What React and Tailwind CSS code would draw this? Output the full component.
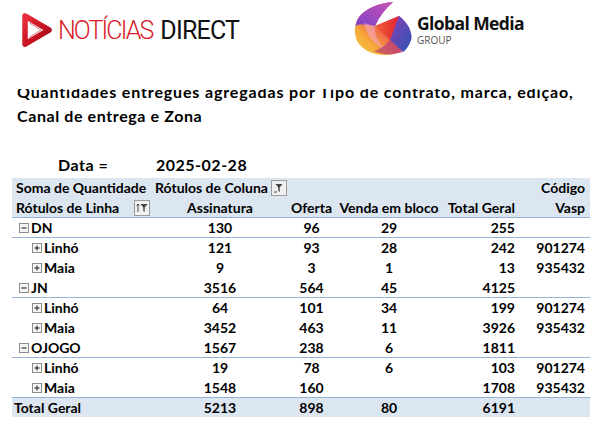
import React from 'react';

const rows = [
  { label: 'DN', level: 0, a: '130', o: '96', v: '29', t: '255', c: '' },
  { label: 'Linhó', level: 1, a: '121', o: '93', v: '28', t: '242', c: '901274' },
  { label: 'Maia', level: 1, a: '9', o: '3', v: '1', t: '13', c: '935432' },
  { label: 'JN', level: 0, a: '3516', o: '564', v: '45', t: '4125', c: '' },
  { label: 'Linhó', level: 1, a: '64', o: '101', v: '34', t: '199', c: '901274' },
  { label: 'Maia', level: 1, a: '3452', o: '463', v: '11', t: '3926', c: '935432' },
  { label: 'OJOGO', level: 0, a: '1567', o: '238', v: '6', t: '1811', c: '' },
  { label: 'Linhó', level: 1, a: '19', o: '78', v: '6', t: '103', c: '901274' },
  { label: 'Maia', level: 1, a: '1548', o: '160', v: '', t: '1708', c: '935432' },
];

const cols = 'grid grid-cols-[140px_136px_47px_108px_74px_73px]';

// little excel expand/collapse box
const ToggleBox = ({ open }) => (
  <svg width="10" height="10" viewBox="0 0 10 10" className="shrink-0">
    <rect x="0.5" y="0.5" width="9" height="9" fill="#f4f4f4" stroke="#8c8c8c" />
    <path d="M2.5 5h5" stroke="#333" strokeWidth="1.2" />
    {!open && <path d="M5 2.5v5" stroke="#333" strokeWidth="1.2" />}
  </svg>
);

const FilterButton = ({ sort }) => (
  <svg width="16" height="16" viewBox="0 0 16 16" className="shrink-0">
    <rect x="0.5" y="0.5" width="15" height="15" fill="#f0f0f0" stroke="#9a9a9a" />
    {sort && <path d="M4 12V4M2.6 5.6L4 4l1.4 1.6" stroke="#444" strokeWidth="1" fill="none" />}
    <path d={sort ? 'M6.5 4h7l-2.8 3.6V12l-1.4-1V7.6z' : 'M4.5 4h7l-2.8 3.6V12l-1.4-1V7.6z'} fill="#444" />
    {!sort && <path d="M3 12h3" stroke="#444" strokeWidth="1" />}
  </svg>
);

const NoticiasLogo = () => (
  <div className="flex items-center gap-[6px]">
    <svg width="30" height="34" viewBox="0 0 30 34">
      <defs>
        <linearGradient id="playRed" x1="0" y1="0" x2="1" y2="1">
          <stop offset="0" stopColor="#e8303a" />
          <stop offset="0.6" stopColor="#c5121f" />
          <stop offset="1" stopColor="#8e0a14" />
        </linearGradient>
      </defs>
      <path d="M3 3L27 17L3 31Z" fill="none" stroke="url(#playRed)" strokeWidth="5.5" strokeLinejoin="round" />
      <path d="M7.5 10L19 17L7.5 24" fill="none" stroke="#a50e19" strokeWidth="1" opacity="0.5" />
    </svg>
    <div className="flex items-baseline font-['Roboto',sans-serif] font-light text-[25px] leading-none">
      <span className="text-[#d91b28] tracking-[-1.9px]">NOTÍCIAS</span>
      <span className="ml-[8px] text-[#111] font-normal tracking-[-0.8px]">DIRECT</span>
    </div>
  </div>
);

const GlobalLogo = () => (
  <div className="flex items-start gap-[5px]">
    <svg width="58" height="56" viewBox="0 0 58 56">
      <defs>
        <linearGradient id="gmBase" x1="1" y1="0" x2="0" y2="1">
          <stop offset="0" stopColor="#9b4fd0" />
          <stop offset="0.35" stopColor="#d9489a" />
          <stop offset="0.55" stopColor="#ef6a4b" />
          <stop offset="0.75" stopColor="#f6a83a" />
          <stop offset="1" stopColor="#f4d43e" />
        </linearGradient>
        <linearGradient id="gmPurple" x1="1" y1="0" x2="0" y2="1">
          <stop offset="0" stopColor="#c952b4" />
          <stop offset="1" stopColor="#7d44c7" />
        </linearGradient>
        <linearGradient id="gmBlue" x1="0" y1="0" x2="1" y2="1">
          <stop offset="0" stopColor="#8a3fb2" />
          <stop offset="1" stopColor="#2c55b8" />
        </linearGradient>
        <linearGradient id="gmRed" x1="0" y1="0" x2="1" y2="0">
          <stop offset="0" stopColor="#f0653a" />
          <stop offset="1" stopColor="#e3202f" />
        </linearGradient>
      </defs>
      <path d="M39 1C26 2 12 7 5 16C0 23 0 33 3 40C8 49 19 54 31 54C44 54 54 48 57 39C59 31 53 21 45 15L21 25C25 16 31 8 39 1Z" fill="url(#gmBase)" />
      <path d="M39 1C26 2 12 7 5 16C3 19 2 22 1.5 25C6 22 14 24 21 25C25 16 31 8 39 1Z" fill="url(#gmPurple)" />
      <path d="M21 25L45 15L36 39Z" fill="url(#gmRed)" />
      <path d="M45 15C53 21 59 31 57 39C55 45 52 49 49 51L36 39Z" fill="url(#gmBlue)" />
      <path d="M10 22C12 34 20 44 34 50C26 44 20 36 21 25Z" fill="#f5b0d8" opacity="0.5" />
      <path d="M20 50C28 54 40 54 49 51L36 39C32 44 26 48 20 50Z" fill="#b0307f" opacity="0.6" />
    </svg>
    <div className="flex flex-col font-['Open_Sans',sans-serif] leading-none mt-[12px]">
      <span className="text-[17.5px] font-bold text-[#111] tracking-[-0.6px] leading-[20px]">Global Media</span>
      <span className="mt-[1px] text-[10px] leading-[12px] text-[#555]">GROUP</span>
    </div>
  </div>
);

export default function App() {
  return (
    <div className="w-[602px] h-[433px] bg-white overflow-hidden font-['Lato',sans-serif] text-black">
      <div className="flex items-start h-[60px]">
        <div className="ml-[22px] mt-[13px] w-[332px]">
          <NoticiasLogo />
        </div>
        <div className="mt-[1px]">
          <GlobalLogo />
        </div>
      </div>

      <div className="ml-[17px] mt-[29px] font-bold text-[16px] leading-[23px] tracking-[0.85px]">
        <div className="h-[14px] overflow-hidden">
          <div className="-mt-[9px] whitespace-nowrap">Quantidades entregues agregadas por Tipo de contrato, marca, edição,</div>
        </div>
        <div className="mt-[1px] tracking-[0.6px]">Canal de entrega e Zona</div>
      </div>

      <div className="flex mt-[28px] font-bold text-[16px] leading-[20px] tracking-[0.5px]">
        <span className="ml-[58px] w-[98px]">Data =</span>
        <span>2025-02-28</span>
      </div>

      <div className="ml-[12px] mt-[3px] w-[578px] font-bold text-[14px] leading-[20px]">
        <div className={`${cols} bg-[#dce6f1] h-[20px]`}>
          <div className="pl-[4px] whitespace-nowrap">Soma de Quantidade</div>
          <div className="flex items-center justify-between pl-[3px] pr-[1px] whitespace-nowrap">
            <span>Rótulos de Coluna</span>
            <FilterButton />
          </div>
          <div />
          <div />
          <div />
          <div className="text-right pr-[5px]">Código</div>
        </div>
        <div className={`${cols} bg-[#dce6f1] h-[20px] border-b border-[#95b3d7]`}>
          <div className="flex items-center justify-between pl-[4px] pr-[2px]">
            <span>Rótulos de Linha</span>
            <FilterButton sort />
          </div>
          <div className="text-center">Assinatura</div>
          <div className="text-center">Oferta</div>
          <div className="text-center whitespace-nowrap">Venda em bloco</div>
          <div className="text-right pr-[2px] whitespace-nowrap">Total Geral</div>
          <div className="text-right pr-[5px]">Vasp</div>
        </div>

        {rows.map((r, i) => (
          <div
            key={i}
            className={`${cols} h-[20px] ${r.level === 0 ? 'border-b border-[#95b3d7]' : ''}`}
          >
            <div className={`flex items-center gap-[2px] ${r.level === 0 ? 'pl-[7px]' : 'pl-[20px]'}`}>
              <ToggleBox open={r.level === 0} />
              <span>{r.label}</span>
            </div>
            <div className="text-center">{r.a}</div>
            <div className="text-center">{r.o}</div>
            <div className="text-center">{r.v}</div>
            <div className="text-right pr-[2px]">{r.t}</div>
            <div className="text-right pr-[5px]">{r.c}</div>
          </div>
        ))}

        <div className={`${cols} h-[20px] bg-[#dce6f1] border-t border-[#95b3d7] -mt-px`}>
          <div className="pl-[2px]">Total Geral</div>
          <div className="text-center">5213</div>
          <div className="text-center">898</div>
          <div className="text-center">80</div>
          <div className="text-right pr-[2px]">6191</div>
          <div />
        </div>
      </div>
    </div>
  );
}
